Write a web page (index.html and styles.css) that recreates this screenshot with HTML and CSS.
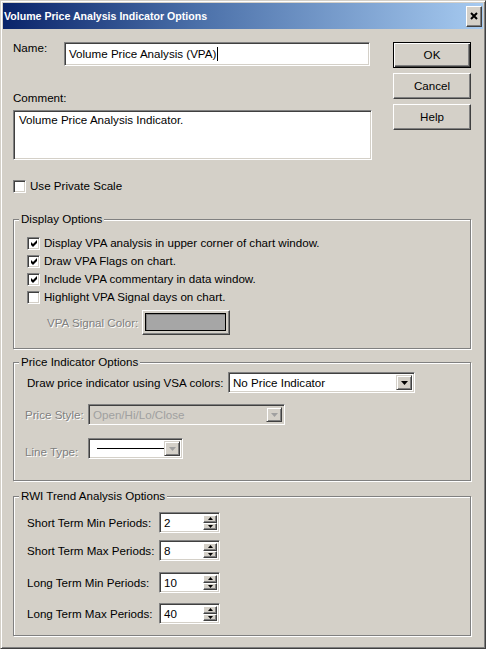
FILE: index.html
```html
<!DOCTYPE html>
<html>
<head>
<meta charset="utf-8">
<title>Volume Price Analysis Indicator Options</title>
<link rel="stylesheet" href="styles.css">
</head>
<body>
<div class="window">
  <div class="titlebar">
    <span class="title">Volume Price Analysis Indicator Options</span>
    <span class="close-btn"><svg width="8" height="8" viewBox="0 0 8 8"><path d="M1 1 L7 7 M7 1 L1 7" stroke="#000" stroke-width="2"/></svg></span>
  </div>
  <div class="client">
    <div class="top">
      <div class="fields">
        <div class="name-row">
          <span class="name-label">Name:</span>
          <div class="edit name-edit">Volume Price Analysis (VPA)<span class="caret"></span></div>
        </div>
        <div class="comment-label">Comment:</div>
        <div class="edit memo">Volume Price Analysis Indicator.</div>
      </div>
      <div class="buttons">
        <div class="btn default">OK</div>
        <div class="btn">Cancel</div>
        <div class="btn">Help</div>
      </div>
    </div>

    <div class="check-row private"><span class="checkbox"></span><span>Use Private Scale</span></div>

    <fieldset class="group g-display">
      <legend>Display Options</legend>
      <div class="group-body">
        <div class="check-row opt"><span class="checkbox"><svg width="7" height="7" viewBox="0 0 7 7"><polygon points="0,2 2,4 6,0 6,3 2,7 0,5" fill="#000"/></svg></span><span>Display VPA analysis in upper corner of chart window.</span></div>
        <div class="check-row opt"><span class="checkbox"><svg width="7" height="7" viewBox="0 0 7 7"><polygon points="0,2 2,4 6,0 6,3 2,7 0,5" fill="#000"/></svg></span><span>Draw VPA Flags on chart.</span></div>
        <div class="check-row opt"><span class="checkbox"><svg width="7" height="7" viewBox="0 0 7 7"><polygon points="0,2 2,4 6,0 6,3 2,7 0,5" fill="#000"/></svg></span><span>Include VPA commentary in data window.</span></div>
        <div class="check-row opt"><span class="checkbox"></span><span>Highlight VPA Signal days on chart.</span></div>
        <div class="color-row">
          <span class="disabled-label color-label">VPA Signal Color:</span>
          <span class="color-btn"><span class="swatch"></span></span>
        </div>
      </div>
    </fieldset>

    <fieldset class="group g-price">
      <legend>Price Indicator Options</legend>
      <div class="group-body">
        <div class="row draw-row">
          <span class="draw-label">Draw price indicator using VSA colors:</span>
          <div class="combo combo-vsa">
            <span class="combo-text">No Price Indicator</span>
            <span class="combo-btn"><svg width="7" height="4" viewBox="0 0 7 4"><polygon points="0,0 7,0 3.5,4" fill="#000"/></svg></span>
          </div>
        </div>
        <div class="row style-row">
          <span class="disabled-label style-label">Price Style:</span>
          <div class="combo combo-style disabled">
            <span class="combo-text">Open/Hi/Lo/Close</span>
            <span class="combo-btn"><svg width="7" height="4" viewBox="0 0 7 4"><polygon points="0,0 7,0 3.5,4" fill="#a0a0a0"/></svg></span>
          </div>
        </div>
        <div class="row line-row">
          <span class="disabled-label style-label line-label">Line Type:</span>
          <div class="combo combo-line">
            <span class="combo-text"><span class="line-sample"></span></span>
            <span class="combo-btn"><svg width="7" height="4" viewBox="0 0 7 4"><polygon points="0,0 7,0 3.5,4" fill="#a0a0a0"/></svg></span>
          </div>
        </div>
      </div>
    </fieldset>

    <fieldset class="group g-rwi">
      <legend>RWI Trend Analysis Options</legend>
      <div class="group-body">
        <div class="row spin-row r1">
          <span class="spin-label">Short Term Min Periods:</span>
          <div class="spin"><span class="spin-text">2</span><span class="spin-btns"><span class="sb"><svg width="5" height="3" viewBox="0 0 5 3"><polygon points="2.5,0 5,3 0,3" fill="#000"/></svg></span><span class="sb"><svg width="5" height="3" viewBox="0 0 5 3"><polygon points="0,0 5,0 2.5,3" fill="#000"/></svg></span></span></div>
        </div>
        <div class="row spin-row r2">
          <span class="spin-label">Short Term Max Periods:</span>
          <div class="spin"><span class="spin-text">8</span><span class="spin-btns"><span class="sb"><svg width="5" height="3" viewBox="0 0 5 3"><polygon points="2.5,0 5,3 0,3" fill="#000"/></svg></span><span class="sb"><svg width="5" height="3" viewBox="0 0 5 3"><polygon points="0,0 5,0 2.5,3" fill="#000"/></svg></span></span></div>
        </div>
        <div class="row spin-row r3">
          <span class="spin-label">Long Term Min Periods:</span>
          <div class="spin"><span class="spin-text">10</span><span class="spin-btns"><span class="sb"><svg width="5" height="3" viewBox="0 0 5 3"><polygon points="2.5,0 5,3 0,3" fill="#000"/></svg></span><span class="sb"><svg width="5" height="3" viewBox="0 0 5 3"><polygon points="0,0 5,0 2.5,3" fill="#000"/></svg></span></span></div>
        </div>
        <div class="row spin-row r4">
          <span class="spin-label">Long Term Max Periods:</span>
          <div class="spin"><span class="spin-text">40</span><span class="spin-btns"><span class="sb"><svg width="5" height="3" viewBox="0 0 5 3"><polygon points="2.5,0 5,3 0,3" fill="#000"/></svg></span><span class="sb"><svg width="5" height="3" viewBox="0 0 5 3"><polygon points="0,0 5,0 2.5,3" fill="#000"/></svg></span></span></div>
        </div>
      </div>
    </fieldset>
  </div>
</div>
</body>
</html>
```

FILE: styles.css
```css
* { box-sizing: border-box; }
html, body { margin: 0; padding: 0; }
body {
  font-family: "Liberation Sans", Arial, sans-serif;
  font-size: 11.6px;
  line-height: 14px;
  color: #000;
  background: #d4d0c8;
}
.window {
  width: 486px;
  height: 649px;
  background: #d4d0c8;
  border: 1px solid;
  border-color: #d4d0c8 #404040 #404040 #d4d0c8;
  box-shadow: inset 1px 1px #fff, inset -1px -1px #808080;
  padding: 2px;
}
.titlebar {
  height: 26px;
  background: linear-gradient(to right, #0a246a 0%, #4a6fa8 40%, #a6caf0 100%);
  display: flex;
  align-items: center;
  justify-content: space-between;
  padding: 0 1px 0 1px;
}
.title {
  color: #fff;
  font-weight: bold;
  font-size: 10.6px;
}
.close-btn {
  width: 16px;
  height: 21px;
  background: #d4d0c8;
  border: 1px solid;
  border-color: #fff #404040 #404040 #fff;
  box-shadow: inset -1px -1px #808080;
  display: flex;
  align-items: center;
  justify-content: center;
}
.client {
  padding: 13px 12px 0 10px;
}
.top {
  display: flex;
  justify-content: space-between;
  align-items: flex-start;
}
.fields { width: 359px; }
.name-row {
  display: flex;
  align-items: flex-start;
}
.name-label { width: 51px; margin-top: -1px; }
.edit {
  background: #fff;
  border: 1px solid;
  border-color: #808080 #fff #fff #808080;
  box-shadow: inset 1px 1px #404040, inset -1px -1px #d4d0c8;
}
.name-edit {
  width: 306px;
  height: 24px;
  padding: 0 4px;
  display: flex;
  align-items: center;
}
.caret {
  width: 1px;
  height: 14px;
  background: #000;
  margin-left: 1px;
}
.comment-label { margin-top: 25px; }
.memo {
  margin-top: 5px;
  height: 50px;
  padding: 2px 5px;
}
.buttons {
  width: 78px;
  display: flex;
  flex-direction: column;
  gap: 5px;
}
.btn {
  height: 26px;
  display: flex;
  align-items: center;
  justify-content: center;
  border: 1px solid;
  border-color: #fff #404040 #404040 #fff;
  box-shadow: inset -1px -1px #808080;
}
.btn.default {
  border-color: #000;
  box-shadow: inset 1px 1px #fff, inset -1px -1px #404040, inset -2px -2px #808080;
}
.check-row {
  display: flex;
  align-items: center;
}
.checkbox {
  width: 13px;
  height: 13px;
  background: #fff;
  border: 1px solid;
  border-color: #808080 #fff #fff #808080;
  box-shadow: inset 1px 1px #404040, inset -1px -1px #d4d0c8;
  display: flex;
  align-items: center;
  justify-content: center;
  margin-right: 4px;
  flex: none;
}
.checkbox svg { margin-left: 1px; margin-top: 1px; }
.private { margin-top: 19px; margin-left: 0; }
.group {
  margin: 0;
  padding: 0 0 0 5px;
  border: 1px solid #808080;
  box-shadow: inset 1px 1px #fff, 1px 1px #fff;
  min-width: 0;
}
.group legend {
  padding: 0 2px;
  line-height: 14px;
  background: #d4d0c8;
}
.g-display { margin-top: 19px; }
.g-display .group-body { padding: 8px 0 13px 8px; }
.opt { height: 18px; }
.color-row {
  margin-top: 4px;
  display: flex;
  align-items: center;
  height: 25px;
}
.disabled-label {
  color: #808080;
  text-shadow: 1px 1px 0 #fff;
}
.color-label { margin-left: 20px; width: 95px; white-space: nowrap; }
.color-btn {
  width: 88px;
  height: 25px;
  border: 1px solid;
  border-color: #fff #404040 #404040 #fff;
  box-shadow: inset -1px -1px #808080;
  padding: 2px 3px 3px 2px;
  display: flex;
}
.swatch {
  flex: 1;
  border: 1px solid #000;
  background: #a6a6a6;
  box-shadow: inset 1px 1px #808080;
}
.g-price { margin-top: 6px; }
.g-price .group-body { padding: 3px 0 21px 6px; }
.row { display: flex; align-items: center; }
.draw-label { width: 201px; margin-left: 2px; white-space: nowrap; }
.combo {
  height: 21px;
  display: flex;
  align-items: stretch;
  background: #fff;
  border: 1px solid;
  border-color: #808080 #fff #fff #808080;
  box-shadow: inset 1px 1px #404040, inset -1px -1px #d4d0c8;
  padding: 2px;
}
.combo-text {
  flex: 1;
  display: flex;
  align-items: center;
  padding-left: 2px;
  white-space: nowrap;
  overflow: hidden;
}
.combo-btn {
  width: 16px;
  background: #d4d0c8;
  border: 1px solid;
  border-color: #d4d0c8 #404040 #404040 #d4d0c8;
  box-shadow: inset 1px 1px #fff, inset -1px -1px #808080;
  display: flex;
  align-items: center;
  justify-content: center;
}
.combo-vsa { width: 187px; }
.style-row { margin-top: 11px; }
.style-label { width: 63px; white-space: nowrap; }
.combo-style { width: 197px; }
.combo.disabled { background: #d4d0c8; }
.combo.disabled .combo-text { color: #a0a0a0; }
.line-row { margin-top: 13px; }
.line-label { margin-top: 7px; }
.combo-line { width: 95px; }
.line-sample {
  display: block;
  width: 67px;
  height: 1px;
  background: #000;
  margin-left: 4px;
}
.g-rwi { margin-top: 8px; }
.g-rwi .group-body { padding: 9px 0 11px 8px; }
.spin-label { width: 132px; white-space: nowrap; }
.r2 { margin-top: 7px; }
.r3 { margin-top: 11px; }
.r4 { margin-top: 10px; }
.spin {
  width: 61px;
  height: 21px;
  display: flex;
  background: #fff;
  border: 1px solid;
  border-color: #808080 #fff #fff #808080;
  box-shadow: inset 1px 1px #404040, inset -1px -1px #d4d0c8;
  padding: 2px;
}
.spin-text {
  flex: 1;
  display: flex;
  align-items: center;
  padding-left: 2px;
}
.spin-btns {
  width: 14px;
  display: flex;
  flex-direction: column;
}
.sb {
  flex: 1;
  background: #d4d0c8;
  border: 1px solid;
  border-color: #fff #404040 #404040 #fff;
  box-shadow: inset -1px -1px #808080;
  display: flex;
  align-items: center;
  justify-content: center;
}
```
